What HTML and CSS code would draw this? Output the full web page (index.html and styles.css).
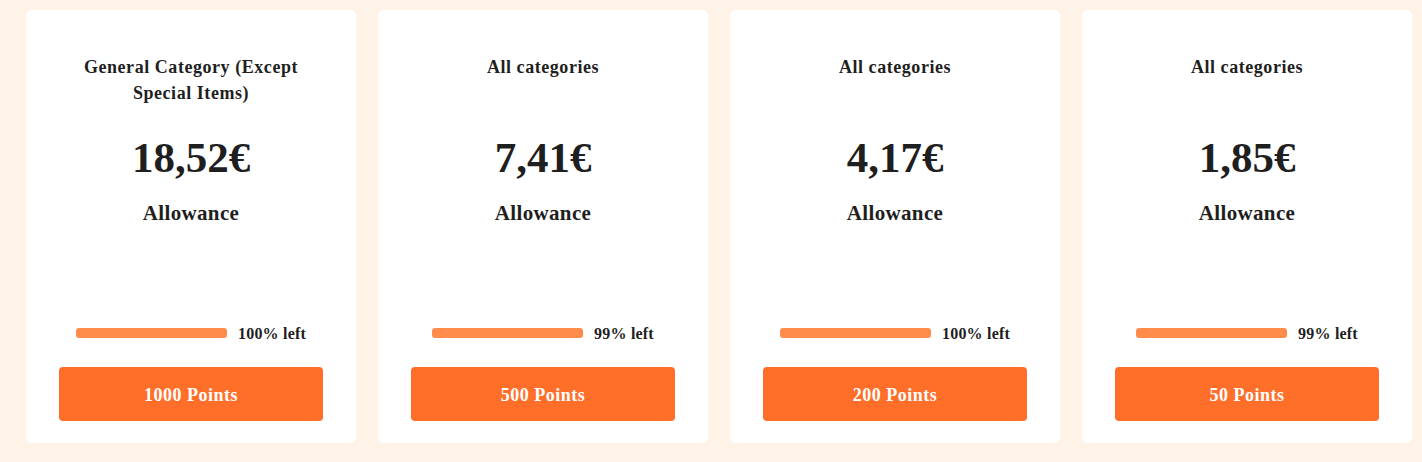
FILE: index.html
```html
<!DOCTYPE html>
<html lang="en">
  <head>
    <meta charset="UTF-8" />
    <meta name="viewport" content="width=device-width, initial-scale=1.0" />
    <title>Allowances</title>
    <link rel="stylesheet" href="styles.css">
  </head>
  <body>
    <div class="cards">
      <!-- carte 1 -->
      <div class="card">
        <h3 class="card-title">General Category (Except Special Items)</h3>
        <div class="price">18,52€</div>
        <div class="label">Allowance</div>
        <div class="card-bottom">
          <div class="progress">
            <div class="bar"></div>
            <span>100% left</span>
          </div>
          <button class="redeem">1000 Points</button>
        </div>
      </div>

      <!-- carte 2 -->
      <div class="card">
        <h3 class="card-title">All categories</h3>
        <div class="price">7,41€</div>
        <div class="label">Allowance</div>
        <div class="card-bottom">
          <div class="progress">
            <div class="bar"></div>
            <span>99% left</span>
          </div>
          <button class="redeem">500 Points</button>
        </div>
      </div>

      <!-- carte 3 -->
      <div class="card">
        <h3 class="card-title">All categories</h3>
        <div class="price">4,17€</div>
        <div class="label">Allowance</div>
        <div class="card-bottom">
          <div class="progress">
            <div class="bar"></div>
            <span>100% left</span>
          </div>
          <button class="redeem">200 Points</button>
        </div>
      </div>

      <!-- carte 4 -->
      <div class="card">
        <h3 class="card-title">All categories</h3>
        <div class="price">1,85€</div>
        <div class="label">Allowance</div>
        <div class="card-bottom">
          <div class="progress">
            <div class="bar"></div>
            <span>99% left</span>
          </div>
          <button class="redeem">50 Points</button>
        </div>
      </div>
    </div>
  </body>
</html>
```

FILE: styles.css
```css
* {
  box-sizing: border-box;
  margin: 0;
  padding: 0;
}

body,
html {
  height: 100%;
  font-family: "Liberation Serif", "Times New Roman", serif;
  background-color: #fef3e6;
  color: #1f1f1f;
}

.cards {
  display: grid;
  grid-template-columns: repeat(4, 330px);
  gap: 22px;
  padding: 10px 10px 19px 26px;
}

/* carte */
.card {
  background-color: #fff;
  border-radius: 5px;
  height: 433px;
  padding: 44px 33px 22px;
  display: flex;
  flex-direction: column;
  align-items: center;
  text-align: center;
}

.card-title {
  font-size: 18px;
  font-weight: bold;
  line-height: 26px;
  letter-spacing: 0.55px;
  min-height: 52px;
  max-width: 230px;
}

.price {
  margin-top: 27px;
  font-size: 43px;
  font-weight: bold;
  line-height: 50px;
}

.label {
  margin-top: 17px;
  font-size: 21px;
  font-weight: bold;
  line-height: 26px;
  letter-spacing: 0.35px;
}

.card-bottom {
  margin-top: auto;
  width: 100%;
}

.progress {
  display: flex;
  justify-content: center;
  align-items: center;
  gap: 11px;
  height: 20px;
  padding-top: 1px;
  font-size: 16px;
  font-weight: bold;
  letter-spacing: 0.2px;
}

.bar {
  width: 151px;
  height: 10px;
  margin-top: -1px;
  border-radius: 3px;
  background-color: #ff8c4b;
}

.redeem {
  margin-top: 24px;
  width: 100%;
  height: 54px;
  padding-top: 3px;
  border: none;
  border-radius: 4px;
  background-color: #ff6f2a;
  color: #fff;
  font-family: inherit;
  font-size: 18px;
  font-weight: bold;
  letter-spacing: 0.5px;
  cursor: pointer;
}
```
